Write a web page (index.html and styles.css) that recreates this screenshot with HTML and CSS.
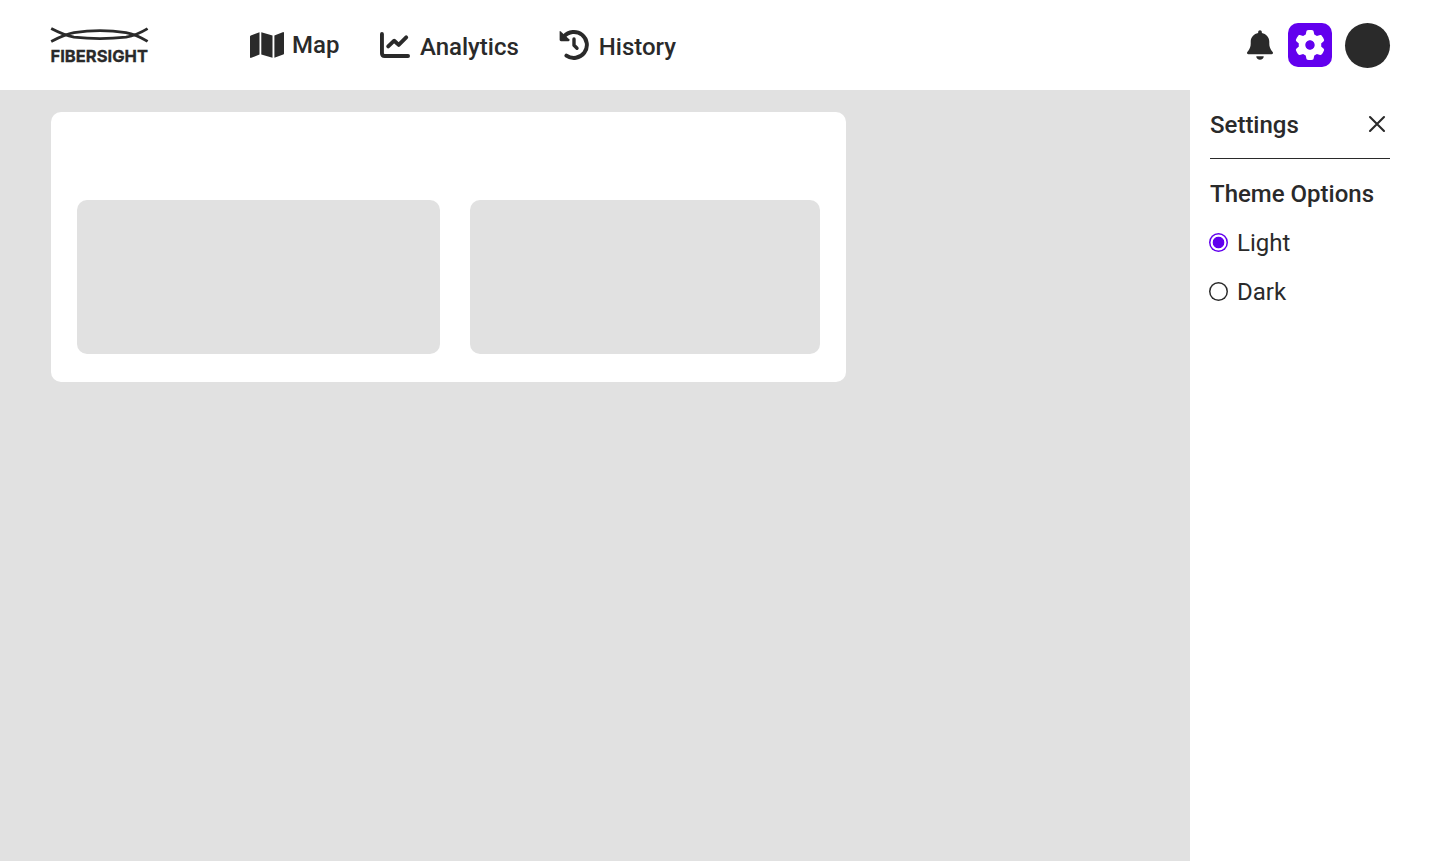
FILE: index.html
```html
<!DOCTYPE html>
<html lang="en">
<head>
<meta charset="utf-8">
<title>Fibersight</title>
<link rel="stylesheet" href="styles.css">
</head>
<body>
<header class="topbar">
  <a class="logo" aria-label="Fibersight">
    <svg width="104" height="40" viewBox="0 0 104 40">
      <g fill="none" stroke="currentColor" stroke-width="2.8">
        <path d="M1.200 2.600C10 7.200 17 9.900 24 11.100C40 12.900 60 12.900 76 11.100C83 9.900 90 7.200 97.600 2.600"/>
        <path d="M1.200 15.400C10 10.800 17 7.800 24 6.600C40 4.200 60 4.200 76 6.600C83 7.800 90 10.800 97.600 15.400"/>
      </g>
      <text class="logo-text" x="0.500" y="36" textLength="97.500" lengthAdjust="spacingAndGlyphs">FIBERSIGHT</text>
    </svg>
  </a>
  <nav class="nav">
    <a class="nav-item nav-map">
      <svg width="34" height="26" viewBox="0 0 34 26" fill="currentColor"><path d="M0 4.600Q0 3.800 .8 3.500L9.500 .2V22.500L1.300 25.800Q0 26.200 0 25ZM11.300 .2L22.500 3.500V25.800L11.300 22.500ZM24.400 3.500L32.700 .2Q34 -.2 34 1V21.400Q34 22.200 33.200 22.500L24.400 25.800Z"/></svg>
      <span>Map</span>
    </a>
    <a class="nav-item nav-analytics">
      <svg width="30" height="26" viewBox="0 0 30 26" fill="none" stroke="currentColor" stroke-width="3.900" stroke-linecap="round" stroke-linejoin="round"><path d="M1.950 1.950V21.300Q1.950 24.050 4.700 24.050H28.050"/><path d="M8.200 14.400L14.200 8.700L18.700 12.900L26.200 5.400"/></svg>
      <span>Analytics</span>
    </a>
    <a class="nav-item nav-history">
      <svg width="30" height="30" viewBox="0 0 30 30" fill="none" stroke="currentColor" stroke-width="3.900" stroke-linecap="round" stroke-linejoin="round"><path d="M5 6.500A13 13 0 1 1 7.400 25.600"/><path d="M15 9V15.200L18 18.200" stroke-width="3.400"/><path d="M.6 1.900Q.6 .3 1.800 1.400L10.200 9.300Q11.300 10.900 9.600 11.200H2Q.6 11.200 .6 9.800Z" fill="currentColor" stroke="none"/></svg>
      <span>History</span>
    </a>
  </nav>
  <div class="actions">
    <button class="bell" aria-label="Notifications">
      <svg width="26" height="30" viewBox="0 0 448 512" fill="currentColor"><path d="M256 32V49.880C328.500 61.390 384 124.200 384 200V233.400C384 278.800 399.500 322.900 427.800 358.400L442.700 377C448.500 384.200 449.600 394.100 445.600 402.400C441.600 410.700 433.200 416 424 416H24C14.770 416 6.365 410.700 2.369 402.400C-1.628 394.100-.504 384.200 5.260 377L20.170 358.400C48.540 322.900 64 278.800 64 233.400V200C64 124.200 119.500 61.390 192 49.880V32C192 14.330 206.300 0 224 0C241.700 0 256 14.330 256 32ZM288 448C288 464.100 281.300 481.300 269.300 493.300C257.300 505.300 240.100 512 224 512C207 512 190.700 505.300 178.700 493.300C166.700 481.300 160 464.100 160 448H288Z"/></svg>
    </button>
    <button class="gear" aria-label="Settings">
      <svg width="30" height="30" viewBox="0 0 512 512" fill="currentColor"><path d="M495.900 166.600C499.200 175.200 496.400 184.900 489.600 191.200L446.300 230.600C447.400 238.900 448 247.400 448 256C448 264.600 447.400 273.100 446.300 281.400L489.600 320.800C496.400 327.100 499.200 336.800 495.900 345.400C491.500 357.300 486.200 368.800 480.200 379.700L475.500 387.800C468.900 398.800 461.500 409.200 453.400 419.100C447.400 426.200 437.700 428.700 428.900 425.900L373.200 408.100C359.800 418.400 344.100 427 329.200 433.600L316.700 490.700C314.700 499.700 307.700 506.100 298.500 508.500C284.700 510.800 270.500 512 255.100 512C241.500 512 227.300 510.800 213.500 508.500C204.300 506.100 197.300 499.700 195.300 490.700L182.800 433.600C167 427 152.200 418.400 138.800 408.100L83.140 425.900C74.300 428.700 64.550 426.200 58.630 419.100C50.520 409.200 43.120 398.800 36.520 387.800L31.840 379.700C25.770 368.800 20.490 357.300 16.060 345.400C12.820 336.800 15.550 327.100 22.410 320.800L65.670 281.400C64.570 273.100 64 264.600 64 256C64 247.400 64.570 238.900 65.670 230.600L22.410 191.200C15.550 184.900 12.820 175.300 16.060 166.600C20.490 154.700 25.780 143.200 31.840 132.300L36.510 124.200C43.120 113.200 50.520 102.800 58.630 92.950C64.550 85.800 74.300 83.320 83.140 86.140L138.800 103.900C152.200 93.560 167 84.960 182.800 78.430L195.300 21.330C197.300 12.250 204.300 5.040 213.500 3.510C227.300 1.201 241.500 0 256 0C270.500 0 284.700 1.201 298.500 3.510C307.700 5.040 314.700 12.250 316.700 21.330L329.200 78.430C344.100 84.960 359.800 93.560 373.200 103.900L428.900 86.140C437.700 83.320 447.400 85.800 453.400 92.950C461.500 102.800 468.900 113.200 475.500 124.200L480.200 132.300C486.200 143.200 491.500 154.700 495.900 166.600ZM256 336C300.200 336 336 300.200 336 255.100C336 211.800 300.200 175.100 256 175.100C211.800 175.100 176 211.800 176 255.100C176 300.200 211.800 336 256 336Z"/></svg>
    </button>
    <div class="avatar"></div>
  </div>
</header>
<div class="body">
  <main class="workspace">
    <section class="panel">
      <div class="tile tile-wide"></div>
      <div class="tile"></div>
    </section>
  </main>
  <aside class="settings">
    <div class="settings-head">
      <h2 class="heading">Settings</h2>
      <button class="close" aria-label="Close"><svg width="18" height="18" viewBox="0 0 18 18" fill="none" stroke="currentColor" stroke-width="2.1" stroke-linecap="round"><path d="M2 2L16 16M16 2L2 16"/></svg></button>
    </div>
    <h3 class="heading theme-title">Theme Options</h3>
    <div class="option"><span class="radio radio-on"></span><span>Light</span></div>
    <div class="option"><span class="radio"></span><span>Dark</span></div>
  </aside>
</div>
</body>
</html>
```
FILE: styles.css
```css
* { box-sizing: border-box; }
body { margin: 0; height: 100vh; display: flex; flex-direction: column; overflow: hidden; background: #fff; color: #2a2a2a; font: 400 24px/28px Roboto, sans-serif; }
svg { display: block; flex: none; }
button { border: 0; padding: 0; background: none; color: inherit; }
.topbar { height: 90px; flex: none; display: flex; align-items: center; padding: 0 50px; }
.logo { width: 200px; padding-top: 1px; }
.logo-text { font: 700 16.500px Inter, sans-serif; fill: currentColor; stroke: currentColor; stroke-width: .3px; }
.nav { display: flex; align-items: center; font-weight: 500; }
.nav-item { display: flex; align-items: center; }
.nav-map { gap: 8px; margin-right: 41px; }
.nav-analytics { gap: 9.500px; margin-right: 40.500px; }
.nav-history { gap: 9.500px; }
.nav-analytics span, .nav-history span { padding-top: 4px; }
.actions { display: flex; align-items: center; margin-left: auto; }
.bell { margin-right: 15px; }
.gear { width: 44px; height: 44px; display: grid; place-items: center; margin-right: 13px; border-radius: 10px; background: #6200ee; color: #fff; }
.avatar { width: 45px; height: 45px; border-radius: 50%; background: #2a2a2a; }
.body { flex: 1; display: flex; min-height: 0; }
.workspace { flex: 1; padding: 22px 0 0 51px; background: #e1e1e1; }
.panel { width: 795px; height: 270px; display: flex; gap: 30px; padding: 88px 26px 28px; border-radius: 10px; background: #fff; }
.tile { width: 350px; border-radius: 10px; background: #e1e1e1; }
.tile-wide { width: 363px; }
.settings { width: 250px; padding: 0 50px 0 20px; }
.settings-head { height: 69px; display: flex; align-items: center; justify-content: space-between; padding: 1px 4px 0 0; border-bottom: 1px solid #2a2a2a; }
.close { margin-bottom: 1px; }
.heading { margin: 0; font-size: 24px; font-weight: 500; white-space: nowrap; }
.theme-title { margin: 21px 0; }
.option { display: flex; align-items: center; gap: 9px; margin: 0 0 21px -1px; }
.radio { width: 19px; height: 19px; margin-bottom: 2px; border-radius: 50%; box-shadow: inset 0 0 0 1.500px #2a2a2a; }
.radio-on { background: radial-gradient(circle, #6200ee 5.400px, transparent 6.200px); box-shadow: inset 0 0 0 1.500px #6200ee; }
```
